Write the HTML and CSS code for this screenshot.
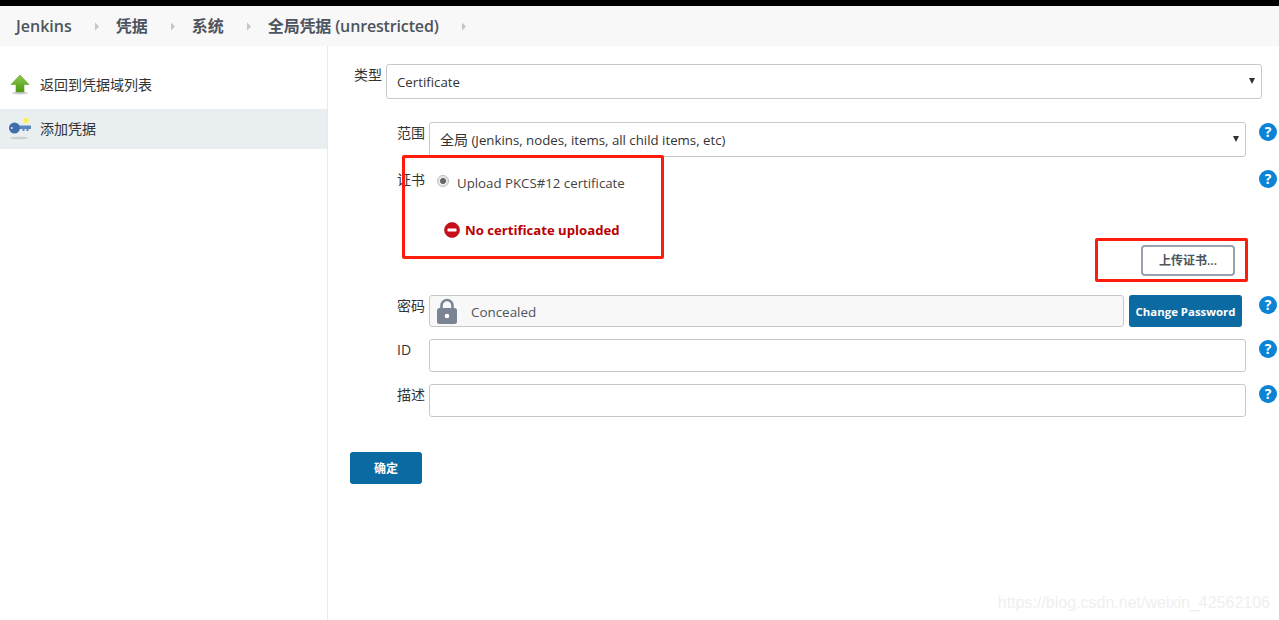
FILE: index.html
```html
<!DOCTYPE html>
<html lang="zh">
<head>
<meta charset="utf-8">
<title>Jenkins</title>
<link rel="stylesheet" href="styles.css">
</head>
<body>
<div class="topbar"></div>
<nav class="crumbs">
  <a class="crumb">Jenkins</a><svg class="chev" viewBox="0 0 5 10"><path d="M0 0l5 5-5 5z"/></svg>
  <a class="crumb">凭据</a><svg class="chev" viewBox="0 0 5 10"><path d="M0 0l5 5-5 5z"/></svg>
  <a class="crumb">系统</a><svg class="chev" viewBox="0 0 5 10"><path d="M0 0l5 5-5 5z"/></svg>
  <a class="crumb">全局凭据 (unrestricted)</a><svg class="chev" viewBox="0 0 5 10"><path d="M0 0l5 5-5 5z"/></svg>
</nav>
<div class="page">
  <aside class="side">
    <a class="task">
      <svg class="task-icon" viewBox="0 0 24 24">
        <defs><linearGradient id="up" x1="0" y1="0" x2="0" y2="1"><stop offset="0" stop-color="#8fc94f"/><stop offset="1" stop-color="#4f9a12"/></linearGradient></defs>
        <ellipse cx="12" cy="20" rx="8" ry="1.500" fill="#ccc"/>
        <path d="M12 2L21 11.500H16V19H8V11.500H3Z" fill="url(#up)" stroke="#5e9a2c" stroke-width=".6"/>
      </svg>
      <span>返回到凭据域列表</span>
    </a>
    <a class="task active">
      <svg class="task-icon" viewBox="0 0 24 24">
        <ellipse cx="11" cy="21" rx="9" ry="1.300" fill="#ccd0d3"/>
        <circle cx="18" cy="3.500" r="3" fill="#f6ee5a" stroke="#fbf7b0"/>
        <path d="M8 8.500H23V12H20.500V14H18.500V12H16.500V14H14.500V12H8Z" fill="#5b86bd"/>
        <circle cx="6.500" cy="11" r="5.500" fill="#3f6eae"/>
        <circle cx="3.800" cy="11" r="1" fill="#dce6f2"/>
      </svg>
      <span>添加凭据</span>
    </a>
  </aside>
  <main class="main">
    <div class="row-kind">
      <label class="label-kind">类型</label>
      <div class="select select-kind">Certificate<i class="caret"></i></div>
    </div>
    <div class="row row-scope">
      <label class="label">范围</label>
      <div class="select field"><span class="zh">全局</span> (Jenkins, nodes, items, all child items, etc)<i class="caret"></i></div>
      <span class="help">?</span>
    </div>
    <div class="row row-cert">
      <label class="label">证书</label>
      <div class="field cert">
        <div class="radio-line"><span class="radio"></span>Upload PKCS#12 certificate</div>
        <div class="error">
          <svg class="error-icon" viewBox="0 0 16 16"><circle cx="8" cy="8" r="7.500" fill="#c9101a" stroke="#a30008" stroke-width=".6"/><rect x="3.500" y="6.500" width="9" height="3" rx=".5" fill="#fff"/></svg>
          <span>No certificate uploaded</span>
        </div>
        <div class="upload-line"><button class="upload">上传证书...</button></div>
      </div>
      <span class="help">?</span>
    </div>
    <div class="row row-pass">
      <label class="label">密码</label>
      <div class="field pass">
        <div class="concealed">
          <svg class="lock" viewBox="0 0 20 26"><path d="M4.500 11V7.500a5.500 5.500 0 0 1 11 0V11" fill="none" stroke="#7a8494" stroke-width="2.600"/><rect y="10" width="20" height="16" rx="2.500" fill="#7a8494"/><circle cx="10" cy="18" r="2.300" fill="#fff"/></svg>
          <span>Concealed</span>
        </div>
        <button class="btn-change">Change Password</button>
      </div>
      <span class="help">?</span>
    </div>
    <div class="row row-id">
      <label class="label">ID</label>
      <div class="field input"></div>
      <span class="help">?</span>
    </div>
    <div class="row row-desc">
      <label class="label">描述</label>
      <div class="field input"></div>
      <span class="help">?</span>
    </div>
    <button class="btn-ok">确定</button>
  </main>
</div>
<div class="mark mark-cert"></div>
<div class="mark mark-upload"></div>
<div class="watermark">https://blog.csdn.net/weixin_42562106</div>
</body>
</html>
```
FILE: styles.css
```css
* { box-sizing: border-box; }
html, body { margin: 0; height: 620px; overflow: hidden; }
body {
  background: #fff;
  color: #333;
  font: 14px/20px "Open Sans", "Noto Sans CJK SC", sans-serif;
  position: relative;
}
.topbar { height: 6px; background: #000; }
.crumbs {
  height: 40px;
  background: #f8f8f8;
  display: flex;
  align-items: center;
  padding-left: 16px;
  color: #4d545d;
  font-size: 16px;
  font-weight: 600;
}
.chev { width: 4px; height: 9px; margin: 0 17px 0 23px; fill: #c3c5c8; }
.crumb { white-space: nowrap; }
.crumb:nth-last-of-type(1) { letter-spacing: -.15px; }
.page { display: flex; height: 574px; }
.side { width: 328px; border-right: 1px solid #e9eaec; padding-top: 19px; }
.task { display: flex; align-items: center; height: 40px; padding-left: 8px; margin-bottom: 4px; color: #333; }
.task.active { background: #e9eef1; }
.task-icon { width: 24px; height: 24px; margin-right: 8px; flex: none; }
.main { flex: 1; min-width: 0; }
.row-kind { display: flex; margin-top: 18px; }
.label-kind { width: 54px; padding-top: 1px; margin-right: 4px; text-align: right; }
.select {
  position: relative;
  height: 35px;
  line-height: 33px;
  padding-left: 10px;
  border: 1px solid #c8c8c8;
  border-radius: 3px;
  background: #fff;
  font-size: 13.250px;
}
.zh { font-size: 14px; }
.select-kind { width: 876px; padding-top: 1px; }
.caret {
  position: absolute;
  right: 6px;
  top: 13px;
  border-left: 3.500px solid transparent;
  border-right: 3.500px solid transparent;
  border-top: 6px solid #333;
}
.row { display: flex; }
.label { width: 97px; padding-left: 69px; margin-right: 4px; text-align: left; flex: none; white-space: nowrap; }
.field { width: 817px; flex: none; }
.help {
  width: 18px;
  height: 18px;
  margin-left: 13px;
  flex: none;
  border-radius: 50%;
  background: #0b84d6;
  color: #fff;
  font: 700 14px/18px "Open Sans", sans-serif;
  text-align: center;
}
.row-scope { margin-top: 23px; }
.row-scope .label { padding-top: 1px; }
.row-scope .help { margin-top: 1px; }
.row-cert { margin-top: 13px; }
.row-cert .help { margin-top: 0; }
.radio-line { display: flex; align-items: center; height: 20px; margin-top: 3px; color: #444; font-size: 13.250px; }
.radio {
  width: 12px;
  height: 12px;
  margin: 0 8px;
  border-radius: 50%;
  border: 1px solid #bbb;
  background: radial-gradient(circle, #666 0 2.500px, #e8e8e8 3.500px);
  position: relative;
  top: -2px;
}
.error { display: flex; align-items: center; margin: 27px 0 0 15px; color: #b80000; font-weight: 700; font-size: 13.150px; }
.error-icon { width: 16px; height: 16px; margin-right: 5px; }
.upload-line { display: flex; justify-content: flex-end; padding-right: 11px; margin-top: 5px; }
.upload {
  width: 94px;
  height: 31px;
  padding: 1px 0 0;
  border: 2px solid #9aa3ad;
  border-radius: 4px;
  background: #fff;
  color: #4d545d;
  font: 600 12px/20px "Open Sans", "Noto Sans CJK SC", sans-serif;
}
.row-pass { margin-top: 19px; }
.row-pass .label, .row-id .label, .row-desc .label { padding-top: 1px; }
.row-pass .help, .row-id .help, .row-desc .help { margin-top: 1px; }
.pass { display: flex; gap: 5px; }
.concealed {
  width: 695px;
  height: 32px;
  display: flex;
  align-items: center;
  padding: 0 0 0 7px;
  background: #f8f8f8;
  border: 1px solid #c8c8c8;
  border-radius: 3px;
  color: #4d545d;
  font-size: 13.400px;
}
.concealed span { padding-top: 2px; }
.lock { width: 20px; height: 26px; margin-right: 14px; flex: none; }
.btn-change {
  width: 113px;
  height: 32px;
  padding: 1px 0 0;
  border: 0;
  border-radius: 3px;
  background: #0b6aa2;
  color: #fff;
  font: 700 11.400px/20px "Open Sans", sans-serif;
}
.row-id { margin-top: 12px; }
.row-desc { margin-top: 12px; }
.input { height: 33px; border: 1px solid #c8c8c8; border-radius: 3px; background: #fff; }
.btn-ok {
  display: block;
  width: 72px;
  height: 32px;
  margin: 35px 0 0 22px;
  padding: 1px 0 0;
  border: 0;
  border-radius: 3px;
  background: #0b6aa2;
  color: #fff;
  font: 700 12px/20px "Open Sans", "Noto Sans CJK SC", sans-serif;
}
.mark { position: absolute; border: 3px solid #ff1c0c; border-radius: 2px; pointer-events: none; }
.mark-cert { left: 402px; top: 155px; width: 262px; height: 104px; }
.mark-upload { left: 1095px; top: 238px; width: 153px; height: 44px; }
.watermark {
  position: absolute;
  right: 9px;
  top: 593px;
  color: #efefef;
  font: 16px/20px "Liberation Sans", sans-serif;
  white-space: nowrap;
}
```
